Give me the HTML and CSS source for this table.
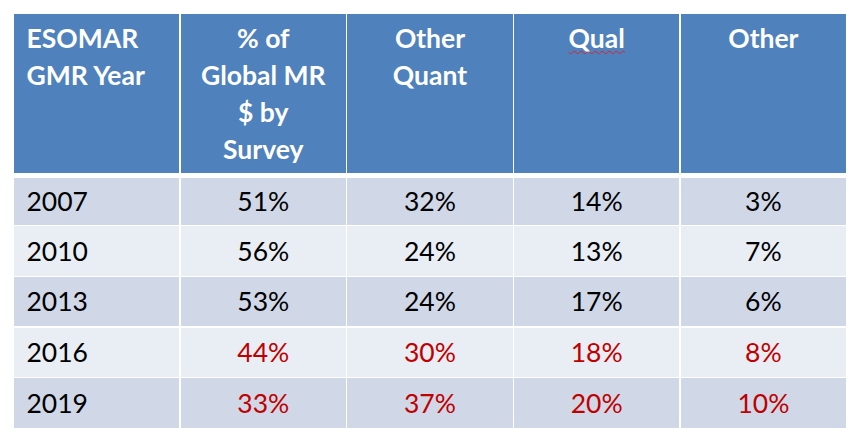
FILE: index.html
```html
<!DOCTYPE html>
<html lang="en">
<head>
<meta charset="utf-8">
<title>ESOMAR GMR</title>
<link rel="stylesheet" href="styles.css">
</head>
<body>
<div class="table">
  <div class="row head">
    <div class="cell left">ESOMAR<br>GMR Year</div>
    <div class="cell">% of<br>Global MR<br>$ by<br>Survey</div>
    <div class="cell">Other<br>Quant</div>
    <div class="cell"><span class="spell">Qual</span></div>
    <div class="cell">Other</div>
  </div>
  <div class="row dark first">
    <div class="cell left">2007</div>
    <div class="cell">51%</div>
    <div class="cell">32%</div>
    <div class="cell">14%</div>
    <div class="cell">3%</div>
  </div>
  <div class="row light">
    <div class="cell left">2010</div>
    <div class="cell">56%</div>
    <div class="cell">24%</div>
    <div class="cell">13%</div>
    <div class="cell">7%</div>
  </div>
  <div class="row dark">
    <div class="cell left">2013</div>
    <div class="cell">53%</div>
    <div class="cell">24%</div>
    <div class="cell">17%</div>
    <div class="cell">6%</div>
  </div>
  <div class="row light">
    <div class="cell left">2016</div>
    <div class="cell red">44%</div>
    <div class="cell red">30%</div>
    <div class="cell red">18%</div>
    <div class="cell red">8%</div>
  </div>
  <div class="row dark last">
    <div class="cell left">2019</div>
    <div class="cell red">33%</div>
    <div class="cell red">37%</div>
    <div class="cell red">20%</div>
    <div class="cell red">10%</div>
  </div>
</div>
</body>
</html>
```
FILE: styles.css
```css
html, body {
  margin: 0;
  padding: 0;
  background: #ffffff;
}
body {
  padding: 14px 0 0 14px;
  font-family: Lato, "Open Sans", sans-serif;
  font-size: 26.5px;
  line-height: 37px;
  color: #000000;
}
.table {
  width: 832px;
  display: flex;
  flex-direction: column;
  gap: 1.4px;
}
.row {
  display: grid;
  grid-template-columns: repeat(5, 1fr);
  column-gap: 1.5px;
  height: 49.3px;
}
.row.first { height: 47px; }
.row.last { height: 49.6px; }
.row.head {
  height: 159px;
  margin-bottom: 3.6px;
}
.cell {
  padding: 0 12.5px;
  text-align: center;
  display: flex;
  align-items: center;
  justify-content: center;
}
.cell.left {
  justify-content: flex-start;
  text-align: left;
}
.head .cell {
  background: #4f81bd;
  color: #ffffff;
  font-weight: 700;
  align-items: flex-start;
  padding-top: 5.5px;
}
.dark .cell { background: #d0d8e8; }
.light .cell { background: #e9edf4; }
.red { color: #c00000; }
.spell {
  text-decoration-line: underline;
  text-decoration-style: wavy;
  text-decoration-color: #e02020;
  text-decoration-thickness: 1px;
  text-decoration-skip-ink: none;
  text-underline-offset: 2px;
}
```
